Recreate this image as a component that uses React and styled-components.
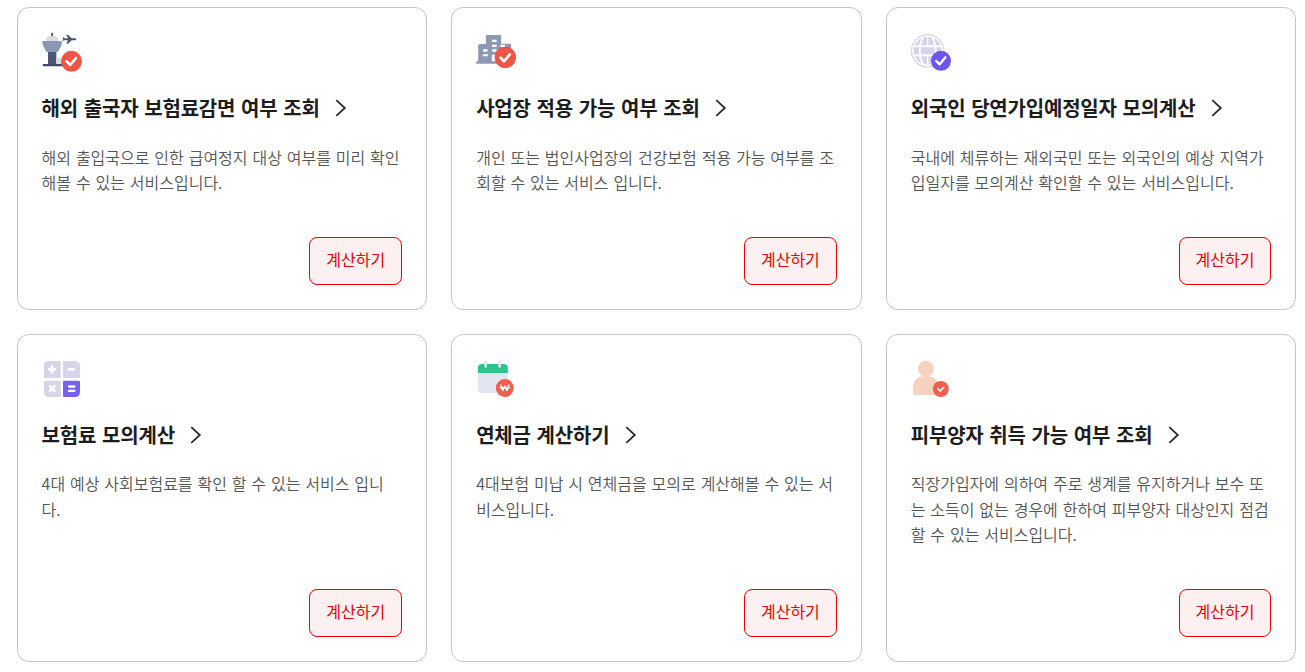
import React from 'react'
import styled, { createGlobalStyle, css } from 'styled-components'

const services = [
  {
    icon: AirportIcon,
    title: '해외 출국자 보험료감면 여부 조회',
    text: '해외 출입국으로 인한 급여정지 대상 여부를 미리 확인\n해볼 수 있는 서비스입니다.',
  },
  {
    icon: BuildingIcon,
    title: '사업장 적용 가능 여부 조회',
    text: '개인 또는 법인사업장의 건강보험 적용 가능 여부를 조\n회할 수 있는 서비스 입니다.',
  },
  {
    icon: GlobeIcon,
    title: '외국인 당연가입예정일자 모의계산',
    text: '국내에 체류하는 재외국민 또는 외국인의 예상 지역가\n입일자를 모의계산 확인할 수 있는 서비스입니다.',
  },
  {
    icon: CalculatorIcon,
    title: '보험료 모의계산',
    text: '4대 예상 사회보험료를 확인 할 수 있는 서비스 입니\n다.',
  },
  {
    icon: CalendarIcon,
    title: '연체금 계산하기',
    text: '4대보험 미납 시 연체금을 모의로 계산해볼 수 있는 서\n비스입니다.',
  },
  {
    icon: PersonIcon,
    title: '피부양자 취득 가능 여부 조회',
    text: '직장가입자에 의하여 주로 생계를 유지하거나 보수 또\n는 소득이 없는 경우에 한하여 피부양자 대상인지 점검\n할 수 있는 서비스입니다.',
  },
]

const App = () => {
  return (
    <>
      <GlobalStyle />
      <ServiceGrid>
        {services.map(({ icon: Icon, title, text }) => (
          <ServiceCard key={title}>
            <Icon />
            <ServiceTitle>
              {title}
              <Chevron viewBox="0 0 12 18">
                <path d="M1.3 1.2 L9.8 9 L1.3 16.8" />
              </Chevron>
            </ServiceTitle>
            <ServiceText>{text}</ServiceText>
            <CalcButton>계산하기</CalcButton>
          </ServiceCard>
        ))}
      </ServiceGrid>
    </>
  )
}

function AirportIcon() {
  return (
    <IconBox viewBox="36 36 132 132">
      <rect x="64" y="38" width="5" height="13" rx="2" fill="#3f4a6b" />
      <path d="M56 49h21q2 0 3 3 5 0 5 4l-3 8H51l-3-8q0-4 5-4 1-3 3-3z" fill="#dcdcde" />
      <path d="M40 63h52q5 0 4 5l-3 11-8 15q-1 2-4 2H52q-3 0-4-2l-8-15-3-11q-1-5 3-5z" fill="#8c97b2" />
      <path d="M54 96h25v38H54z" fill="#4b5777" />
      <path d="M79 114h18v19H79z" fill="#d9dadc" />
      <rect x="38" y="132" width="64" height="7" rx="3" fill="#3f4a6b" />
      <path d="M98 50l6 5h10l-5-11h5l11 11h9q5 0 5 3t-5 3h-9l-11 10h-5l5-10h-11l-7 2 3-5z" fill="#4b5777" />
      <circle cx="124.500" cy="124" r="31.500" fill="#ef5444" />
      <path d="M110 124l10.500 11L138 114" fill="none" stroke="#fff" strokeWidth="8" strokeLinecap="round" strokeLinejoin="round" />
    </IconBox>
  )
}

function BuildingIcon() {
  return (
    <IconBox viewBox="33.500 36 132 132">
      <path d="M66 45h43v26h27q3 0 3 4v56H34v-7h6V77q0-5 5-5h18V49q0-4 3-4z" fill="#8d99b4" />
      <g fill="#fff">
        <rect x="81" y="59" width="15" height="7" rx="3.500" />
        <rect x="81" y="74" width="15" height="7" rx="3.500" />
        <rect x="106" y="74" width="15" height="7" rx="3.500" />
        <rect x="54" y="88" width="15" height="7" rx="3.500" />
        <rect x="81" y="88" width="15" height="7" rx="3.500" />
        <rect x="54" y="102" width="15" height="7" rx="3.500" />
        <path d="M81 107q0-3 3-3h9v20H81z" />
      </g>
      <circle cx="121.500" cy="112" r="32" fill="#ef5444" />
      <path d="M107 113l10.500 11L135 103" fill="none" stroke="#fff" strokeWidth="8" strokeLinecap="round" strokeLinejoin="round" />
    </IconBox>
  )
}

function GlobeIcon() {
  return (
    <IconBox viewBox="33.500 36 132 132">
      <circle cx="83.500" cy="92.500" r="42" fill="#d6d2ea" />
      <g fill="none" stroke="#fff" strokeWidth="6">
        <path d="M38 79h91M38 106h91" />
        <ellipse cx="83.500" cy="92.500" rx="24" ry="49" />
        <path d="M83.500 48v31M83.500 106v31" strokeWidth="4" />
      </g>
      <circle cx="83.500" cy="92.500" r="48.500" fill="none" stroke="#d6d2ea" strokeWidth="3.500" />
      <circle cx="123.500" cy="122.500" r="30" fill="#6d55ee" />
      <path d="M109 123l10.500 10L137 112" fill="none" stroke="#fff" strokeWidth="7" strokeLinecap="round" strokeLinejoin="round" />
    </IconBox>
  )
}

function CalculatorIcon() {
  return (
    <IconBox viewBox="36 27 132 132">
      <path d="M58 33h31q3 0 3 3v48H45q-3 0-3-3V49q0-16 16-16z" fill="#d8d4ea" />
      <path d="M100 33h34q16 0 16 16v31q0 4-4 4h-43q-4 0-4-4V36z" fill="#d8d4ea" />
      <path d="M46 92h42q4 0 4 4v41q0 4-4 4H58q-16 0-16-16V96q0-4 4-4z" fill="#d8d4ea" />
      <path d="M103 92h43q4 0 4 4v29q0 16-16 16h-31q-4 0-4-4V96q0-4 4-4z" fill="#7660ef" />
      <g fill="none" stroke="#fff" strokeWidth="8" strokeLinecap="round">
        <path d="M58 58h17M66.500 50v17M116 58.500h16M60 108.500l14 14M74 108.500l-14 14" />
        <path d="M117 109.500h16M117 122.500h16" strokeWidth="7" />
      </g>
    </IconBox>
  )
}

function CalendarIcon() {
  return (
    <IconBox viewBox="33.500 27 132 132">
      <path d="M39 66h90v50q0 13-13 13H52q-13 0-13-13z" fill="#e3e5f2" />
      <path d="M39 69V55q0-13 13-13h64q13 0 13 13v14z" fill="#2ac48c" />
      <path d="M62.500 36.500v13M104.500 36.500v13" stroke="#dfe2f0" strokeWidth="8" strokeLinecap="round" />
      <circle cx="120" cy="114" r="27" fill="#ee604e" />
      <path d="M108 106l5.500 15 6.500-13 6.500 13 5.500-15" fill="none" stroke="#fff" strokeWidth="5" strokeLinecap="round" strokeLinejoin="round" />
      <path d="M104 113h32" stroke="#fff" strokeWidth="4" />
    </IconBox>
  )
}

function PersonIcon() {
  return (
    <IconBox viewBox="33.500 27 132 132">
      <circle cx="78" cy="56.500" r="24" fill="#f8d2c1" />
      <path d="M39 117q0-39 39-39t39 39v18H49q-10 0-10-10z" fill="#f8d2c1" />
      <circle cx="123" cy="117" r="24" fill="#ee604e" />
      <path d="M113.500 115l8 8 11-12" fill="none" stroke="#fff" strokeWidth="5" />
    </IconBox>
  )
}

const GlobalStyle = createGlobalStyle`
    *{
        box-sizing: border-box;
    }
    body{
        margin: 0;
        background-color: #fff;
    }
`
const textStyle = css`
    font-family: 'Noto Sans CJK KR', sans-serif;
    font-style: normal;
    white-space: pre;
`
const ServiceGrid = styled.main`
    display: grid;
    grid-template-columns: repeat(3, 1fr);
    grid-template-rows: 302.55px 328.45px;
    gap: 24px;
    padding: 7px 8.7px 10px 16.6px;
`
const ServiceCard = styled.article`
    display: flex;
    flex-direction: column;
    align-items: flex-start;
    min-width: 0;
    padding: 24px;
    border: 1px solid #c6c6c6;
    border-radius: 12px;
    background-color: #fff;
`
const IconBox = styled.svg`
    flex: none;
    display: block;
    width: 44px;
    height: 44px;
`
const ServiceTitle = styled.h3`
    ${textStyle}
    display: flex;
    align-items: center;
    height: 32px;
    margin: 16px 0 0;
    color: #1d1d1d;
    font-size: 20px;
    font-weight: 700;
    line-height: 32px;
    letter-spacing: -0.2px;
    word-spacing: 1.5px;
`
const Chevron = styled.svg`
    width: 12px;
    height: 18px;
    margin-left: 15.5px;
    fill: none;
    stroke: #2a2a2a;
    stroke-width: 1.8;
`
const ServiceText = styled.p`
    ${textStyle}
    margin: 20.7px 0 0;
    color: #555;
    font-size: 16px;
    font-weight: 350;
    line-height: 25.6px;
    word-spacing: 1.3px;
`
const CalcButton = styled.button`
    ${textStyle}
    align-self: flex-end;
    width: 92.7px;
    height: 48px;
    margin-top: auto;
    padding: 0 0 4px;
    border: 1px solid #eb0000;
    border-radius: 8px;
    background-color: #fdf0f1;
    color: #eb0000;
    font-size: 16px;
`
export default App
